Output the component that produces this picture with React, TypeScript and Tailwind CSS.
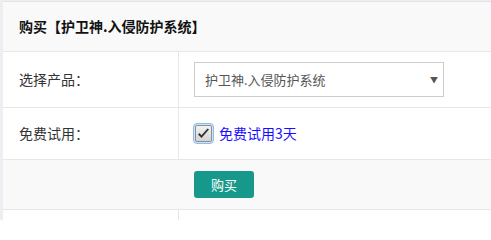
function CheckBox() {
  return (
    <span className="flex h-[21px] w-[21px] items-center justify-center rounded-[4px] border border-[#8fbcef] bg-[#cfe2f8]">
      <span className="flex h-[17px] w-[17px] items-center justify-center rounded-[2px] border border-[#8e8f8f] bg-gradient-to-b from-[#f2f2f2] to-[#d4d4d4]">
        <svg width="13" height="12" viewBox="0 0 13 12">
          <path d="M1 6.5 L4.5 10 L12 1.5 L10.5 0.5 L4.5 7.3 L2.5 5 Z" fill="#333" />
        </svg>
      </span>
    </span>
  );
}

export default function App() {
  return (
    <div
      className="h-[220px] w-[491px] overflow-hidden bg-[#eceef1] pl-[3px] pt-[1px] text-[14px] text-[#333]"
      style={{ fontFamily: '"Noto Sans CJK SC", "Liberation Sans", sans-serif' }}
    >
      <div className="border-t border-[#e3e3e3] bg-white">
        <div className="flex h-[50px] items-center border-b border-[#e7e7e7] bg-[#f9f9f9] pl-4 font-bold text-[#111]">
          购买【护卫神.入侵防护系统】
        </div>

        <div className="flex h-[56px] border-b border-[#e7e7e7]">
          <div className="flex w-[176px] items-center border-r border-[#e7e7e7] pl-4">选择产品：</div>
          <div className="flex items-center pl-[15px]">
            <div className="flex h-[35px] w-[250px] items-center justify-between border border-[#cccccc] pl-[10px] pr-[5px] text-[13px] text-[#555]">
              <span>护卫神.入侵防护系统</span>
              <span className="text-[8px] text-[#555]">▼</span>
            </div>
          </div>
        </div>

        <div className="flex h-[52px] border-b border-[#e7e7e7]">
          <div className="flex w-[176px] items-center border-r border-[#e7e7e7] pl-4">免费试用：</div>
          <div className="flex items-center gap-[5px] pl-[14px]">
            <CheckBox />
            <span className="text-[#1a0dff]">免费试用3天</span>
          </div>
        </div>

        <div className="flex h-[50px] items-center border-b border-[#e7e7e7] bg-[#f9f9f9] pl-[191px]">
          <button className="h-[27px] w-[60px] rounded-[3px] bg-[#16998a] text-[13px] text-white">购买</button>
        </div>

        <div className="flex h-[20px]">
          <div className="w-[176px] border-r border-[#e7e7e7]" />
        </div>
      </div>
    </div>
  );
}
